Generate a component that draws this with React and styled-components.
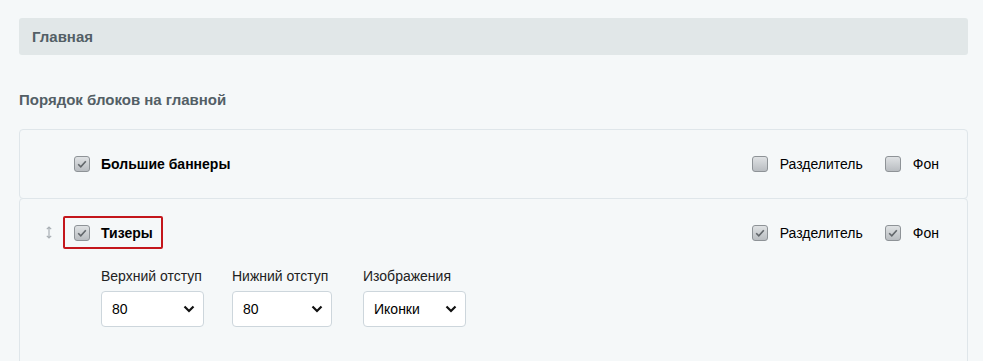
import React from "react";
import styled, { createGlobalStyle } from "styled-components";

const Global = createGlobalStyle`
  html, body { margin: 0; padding: 0; background: #f5f8f9; }
  body { font-family: "Liberation Sans", Arial, sans-serif; font-size: 14px; color: #333; }
`;

const Page = styled.div`
  padding: 18px 15px 0 19px;
`;

const SectionBar = styled.div`
  height: 37px;
  background: #e1e7e8;
  border-radius: 3px;
  display: flex;
  align-items: center;
  padding-left: 13px;
  font-weight: bold;
  font-size: 15px;
  color: #535f66;
`;

const Title = styled.div`
  margin-top: 37px;
  height: 16px;
  line-height: 16px;
  font-weight: bold;
  font-size: 15px;
  color: #535f66;
`;

const List = styled.div`
  margin-top: 21px;
  display: flex;
  flex-direction: column;
`;

const Card = styled.div`
  border: 1px solid #dfe6ea;
  border-radius: 4px;
  background: #f5f8f9;
  & + & { margin-top: -1px; }
  padding-bottom: ${(p) => p.$pb || 0}px;
`;

const Row = styled.div`
  height: ${(p) => p.$h}px;
  display: flex;
  align-items: center;
  padding-left: ${(p) => p.$pl}px;
  padding-right: 28px;
`;

const Left = styled.div`
  display: flex;
  align-items: center;
  flex: 1;
`;

const Right = styled.div`
  display: flex;
  align-items: center;
  gap: 22px;
`;

const Check = styled.label`
  display: flex;
  align-items: center;
  gap: ${(p) => p.$gap || 12}px;
  font-weight: ${(p) => (p.$bold ? "bold" : "normal")};
  color: #000;
  font-size: 14px;
`;

const Box = styled.span`
  width: 16px;
  height: 16px;
  box-sizing: border-box;
  border: 1px solid #8e9397;
  border-radius: 3px;
  background: linear-gradient(#dfe2e4, #b9bdc1);
  display: flex;
  align-items: center;
  justify-content: center;
  flex: none;
`;

const Highlight = styled.div`
  display: flex;
  align-items: center;
  height: 33px;
  box-sizing: border-box;
  border: 2px solid #c4161c;
  border-radius: 2px;
  padding: 0 8px 0 9px;
  margin-left: 10px;
`;

const Drag = styled.span`
  display: flex;
  width: 8px;
  justify-content: center;
`;

const Settings = styled.div`
  display: flex;
  padding-left: 81px;
  margin-top: 2px;
`;

const Field = styled.div`
  width: 131px;
  display: flex;
  flex-direction: column;
`;

const FieldLabel = styled.div`
  font-size: 14px;
  line-height: 16px;
  color: #222;
  margin-bottom: 7px;
`;

const Select = styled.div`
  width: ${(p) => p.$w}px;
  height: 36px;
  box-sizing: border-box;
  border: 1px solid #cdd6dc;
  border-radius: 4px;
  background: #fff;
  display: flex;
  align-items: center;
  justify-content: space-between;
  padding: 0 8px 0 10px;
  font-size: 14px;
  color: #000;
`;

function Checkbox({ checked }) {
  return (
    <Box>
      {checked && (
        <svg width="12" height="12" viewBox="0 0 12 12">
          <path d="M2.2 6.2 L4.8 8.8 L9.8 3.2" fill="none" stroke="#62676b" strokeWidth="1.6" />
        </svg>
      )}
    </Box>
  );
}

function Chevron() {
  return (
    <svg width="12" height="8" viewBox="0 0 12 8">
      <path d="M1.5 1.5 L6 6 L10.5 1.5" fill="none" stroke="#111" strokeWidth="2.2" />
    </svg>
  );
}

function DragIcon() {
  return (
    <svg width="6" height="13" viewBox="0 0 6 13">
      <path d="M3 1 V12 M0.8 3.2 L3 1 L5.2 3.2 M0.8 9.8 L3 12 L5.2 9.8" fill="none" stroke="#a9b0b5" strokeWidth="1.2" />
    </svg>
  );
}

function Options({ a, b }) {
  return (
    <Right>
      <Check>
        <Checkbox checked={a} />
        Разделитель
      </Check>
      <Check>
        <Checkbox checked={b} />
        Фон
      </Check>
    </Right>
  );
}

export default function App() {
  return (
    <>
      <Global />
      <Page>
        <SectionBar>Главная</SectionBar>
        <Title>Порядок блоков на главной</Title>
        <List>
          <Card>
            <Row $h={68} $pl={54}>
              <Left>
                <Check $bold $gap={11}>
                  <Checkbox checked />
                  Большие баннеры
                </Check>
              </Left>
              <Options a={false} b={false} />
            </Row>
          </Card>
          <Card $pb={40}>
            <Row $h={67} $pl={25}>
              <Left>
                <Drag>
                  <DragIcon />
                </Drag>
                <Highlight>
                  <Check $bold $gap={11}>
                    <Checkbox checked />
                    Тизеры
                  </Check>
                </Highlight>
              </Left>
              <Options a b />
            </Row>
            <Settings>
              <Field>
                <FieldLabel>Верхний отступ</FieldLabel>
                <Select $w={103}>
                  80
                  <Chevron />
                </Select>
              </Field>
              <Field>
                <FieldLabel>Нижний отступ</FieldLabel>
                <Select $w={100}>
                  80
                  <Chevron />
                </Select>
              </Field>
              <Field>
                <FieldLabel>Изображения</FieldLabel>
                <Select $w={103}>
                  Иконки
                  <Chevron />
                </Select>
              </Field>
            </Settings>
          </Card>
        </List>
      </Page>
    </>
  );
}
